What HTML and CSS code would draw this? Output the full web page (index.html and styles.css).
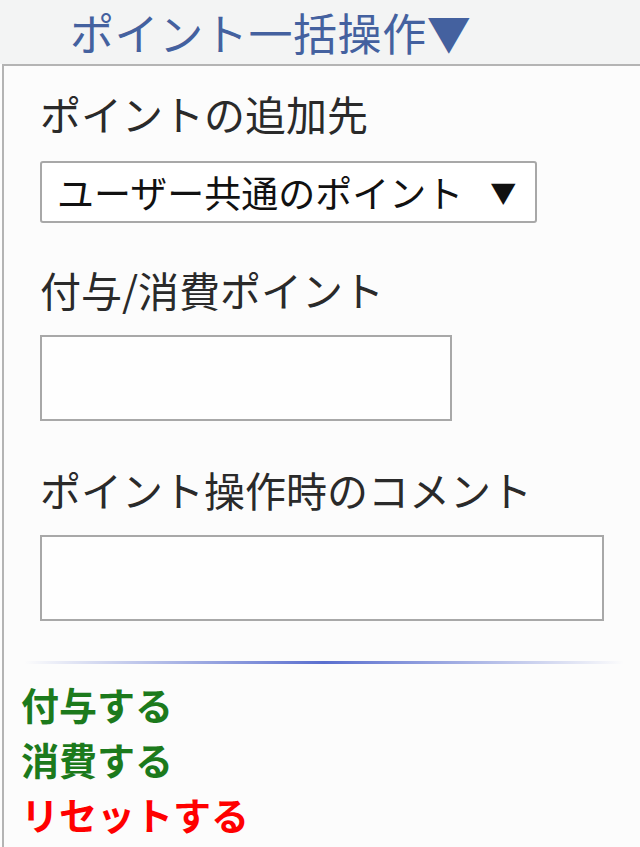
FILE: index.html
```html
<!DOCTYPE html>
<html lang="ja">
<head>
    <meta charset="UTF-8">
    <meta name="viewport" content="width=device-width, initial-scale=1.0">
    <title>ポイント一括操作</title>
    <link rel="stylesheet" href="styles.css">
</head>
<body>
    <div class="menu-head">ポイント一括操作▼</div>

    <div class="panel">
        <div class="field pick">
            <label class="field-label">ポイントの追加先</label>
            <div class="select-box">
                <span>ユーザー共通のポイント</span>
                <span class="select-arrow">▼</span>
            </div>
        </div>

        <div class="field">
            <label class="field-label">付与/消費ポイント</label>
            <div class="text-box short"></div>
        </div>

        <div class="field">
            <label class="field-label">ポイント操作時のコメント</label>
            <div class="text-box wide"></div>
        </div>

        <div class="divider"></div>

        <div class="actions">
            <a class="action give">付与する</a>
            <a class="action use">消費する</a>
            <a class="action reset">リセットする</a>
        </div>
    </div>
</body>
</html>
```

FILE: styles.css
```css
body {
    margin: 0;
    font-family: "Noto Sans CJK JP", "Noto Sans", sans-serif;
    background: #fdfdfd;
    color: #222;
    height: 847px;
    overflow: hidden;
}
.menu-head {
    height: 64px;
    background: #f3f4f4;
    color: #44619f;
    font-size: 44px;
    letter-spacing: 0.6px;
    line-height: 64px;
    padding-left: 70px;
    box-sizing: border-box;
}
.panel {
    margin-left: 2px;
    border-top: 2px solid #b4b4b4;
    border-left: 2px solid #b4b4b4;
    background: #fcfcfc;
    padding: 19px 0 0 0;
    min-height: 800px;
}
.field {
    padding-left: 36px;
    margin-bottom: 40px;
}
.field.pick {
    margin-bottom: 38px;
}
.field-label {
    display: block;
    font-size: 41px;
    line-height: 56px;
    color: #2a2a2a;
    margin-bottom: 18px;
}
.pick .field-label {
    margin-bottom: 20px;
}
.select-box {
    width: 497px;
    height: 62px;
    box-sizing: border-box;
    border: 2px solid #a8a8a8;
    border-radius: 3px;
    background: #fff;
    font-size: 37px;
    line-height: 56px;
    color: #111;
    padding-left: 15px;
    display: flex;
    align-items: center;
}
.select-arrow {
    font-size: 26px;
    margin-left: 27px;
}
.text-box {
    height: 86px;
    box-sizing: border-box;
    border: 2px solid #a8a8a8;
    background: #fefefe;
}
.text-box.short {
    width: 412px;
}
.text-box.wide {
    width: 564px;
}
.divider {
    height: 3px;
    margin: 0 16px 0 20px;
    background: linear-gradient(to right, rgba(80, 100, 200, 0), #5a6fcf 50%, rgba(80, 100, 200, 0));
}
.actions {
    padding: 12px 0 0 17px;
    display: flex;
    flex-direction: column;
}
.action {
    font-size: 38px;
    line-height: 55px;
    font-weight: bold;
    cursor: pointer;
}
.give, .use {
    color: #1c7a1c;
}
.reset {
    color: #ff0000;
}
```
